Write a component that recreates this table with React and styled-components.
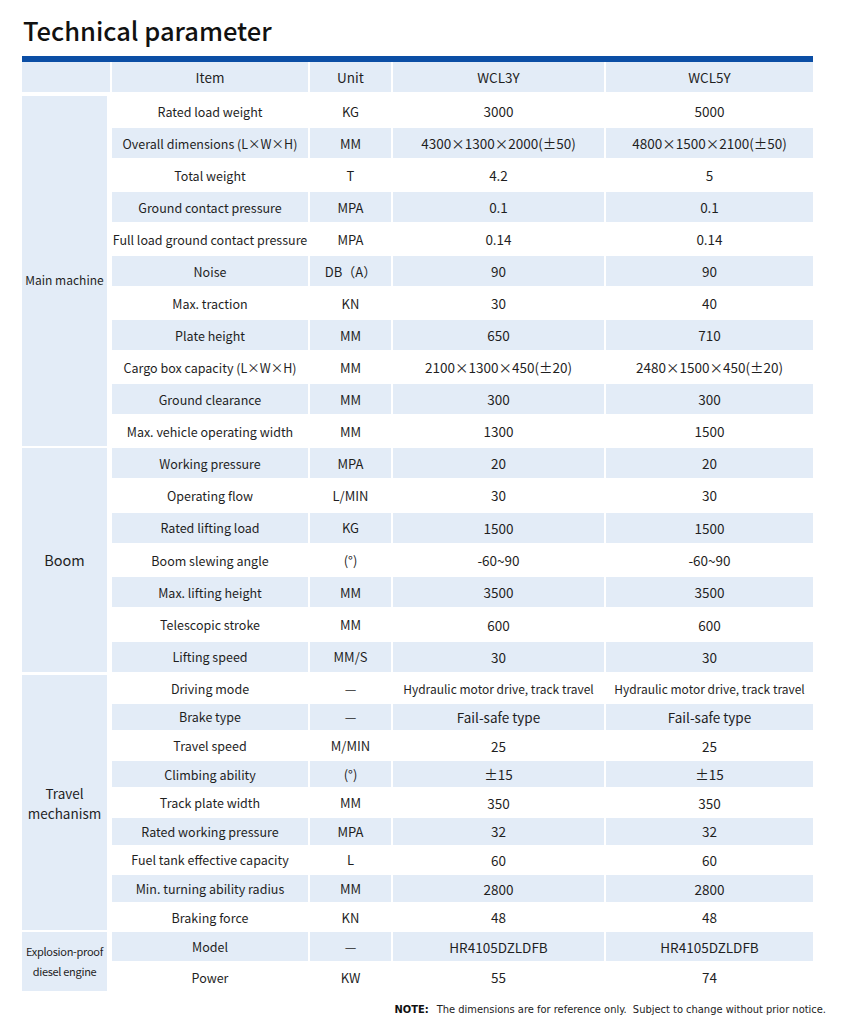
import React from 'react';
import styled, {createGlobalStyle} from 'styled-components';

const colors = {
  text: '#1f1f1f',
  bar: '#0b4ea5',
  stripe: '#e3ecf7',
  white: '#ffffff',
};

const GlobalStyle = createGlobalStyle`
  html, body {
    margin: 0;
    padding: 0;
    background: #fff;
  }
  body {
    font-family: "Noto Sans CJK SC", "Noto Sans", sans-serif;
    color: ${colors.text};
  }
`;

const Page = styled.div`
  width: 846px;
  height: 1024px;
  box-sizing: border-box;
  padding: 13px 33px 0 22px;
`;

const Title = styled.h1`
  margin: 0 0 0 1px;
  font-size: 25.5px;
  line-height: 34px;
  font-weight: 500;
  color: #111;
`;

const Bar = styled.div`
  margin-top: 9px;
  height: 6px;
  background: ${colors.bar};
`;

const Section = styled.div`
  display: grid;
  grid-template-columns: 88px 196px 81px 211px 207px;
  grid-auto-rows: ${p => p.$rowHeight}px;
  column-gap: 2px;
  row-gap: 2px;
  margin-top: ${p => p.$top || 0}px;
`;

const Cell = styled.div`
  display: flex;
  align-items: center;
  justify-content: center;
  text-align: center;
  font-size: ${p => p.$size || 13.5}px;
  white-space: nowrap;
  background: ${p => (p.$striped ? colors.stripe : colors.white)};
`;

const GroupCell = styled.div`
  grid-row: span ${p => p.$span};
  display: flex;
  align-items: center;
  justify-content: center;
  text-align: center;
  white-space: nowrap;
  background: ${colors.stripe};
  margin-right: ${p => (p.$head ? 0 : 3)}px;
  font-size: ${p => p.$size || 13}px;
  line-height: ${p => p.$lineHeight || 1.3};
  letter-spacing: ${p => p.$tracking || 0}px;
  padding-top: ${p => p.$shift || 0}px;
  box-sizing: border-box;
`;

const Note = styled.div`
  margin-top: 12px;
  display: flex;
  justify-content: flex-end;
  gap: 8px;
  font-family: "Liberation Sans Narrow", "DejaVu Sans Condensed", "Liberation Sans", sans-serif;
  font-size: 11px;
  color: #222;
  margin-right: -13px;
`;

const NoteLabel = styled.b`
  font-weight: 700;
  color: #111;
`;

const groups = [
  {
    name: 'Main machine',
    rowHeight: 30,
    top: 4,
    size: 12,
    shift: 18,
    rows: [
      ['Rated load weight', 'KG', '3000', '5000'],
      ['Overall dimensions (L×W×H)', 'MM', '4300×1300×2000(±50)', '4800×1500×2100(±50)'],
      ['Total weight', 'T', '4.2', '5'],
      ['Ground contact pressure', 'MPA', '0.1', '0.1'],
      ['Full load ground contact pressure', 'MPA', '0.14', '0.14'],
      ['Noise', 'DB（A）', '90', '90'],
      ['Max. traction', 'KN', '30', '40'],
      ['Plate height', 'MM', '650', '710'],
      ['Cargo box capacity (L×W×H)', 'MM', '2100×1300×450(±20)', '2480×1500×450(±20)'],
      ['Ground clearance', 'MM', '300', '300'],
      ['Max. vehicle operating width', 'MM', '1300', '1500'],
    ],
  },
  {
    name: 'Boom',
    rowHeight: 30.3,
    top: 2,
    size: 14.5,
    shift: 0,
    rows: [
      ['Working pressure', 'MPA', '20', '20'],
      ['Operating flow', 'L/MIN', '30', '30'],
      ['Rated lifting load', 'KG', '1500', '1500'],
      ['Boom slewing angle', '(°)', '-60~90', '-60~90'],
      ['Max. lifting height', 'MM', '3500', '3500'],
      ['Telescopic stroke', 'MM', '600', '600'],
      ['Lifting speed', 'MM/S', '30', '30'],
    ],
  },
  {
    name: <>Travel<br/>mechanism</>,
    rowHeight: 26.6,
    top: 3,
    size: 13.5,
    lineHeight: 1.45,
    shift: 2,
    rows: [
      ['Driving mode', '—', 'Hydraulic motor drive, track travel', 'Hydraulic motor drive, track travel'],
      ['Brake type', '—', 'Fail-safe type', 'Fail-safe type'],
      ['Travel speed', 'M/MIN', '25', '25'],
      ['Climbing ability', '(°)', '±15', '±15'],
      ['Track plate width', 'MM', '350', '350'],
      ['Rated working pressure', 'MPA', '32', '32'],
      ['Fuel tank effective capacity', 'L', '60', '60'],
      ['Min. turning ability radius', 'MM', '2800', '2800'],
      ['Braking force', 'KN', '48', '48'],
    ],
  },
  {
    name: <>Explosion-proof<br/>diesel engine</>,
    rowHeight: 28.5,
    top: 2,
    size: 11,
    lineHeight: 1.8,
    tracking: -0.3,
    shift: 0,
    rows: [
      ['Model', '—', 'HR4105DZLDFB', 'HR4105DZLDFB'],
      ['Power', 'KW', '55', '74'],
    ],
  },
];

const cellSize = (text, col) => {
  if (col === 0) return 12.5;
  if (col === 1) return 13;
  if (text.length > 24) return 12;
  return 13.5;
};

export default function App() {
  let index = 0;
  return (
    <Page>
      <GlobalStyle/>
      <Title>Technical parameter</Title>
      <Bar/>
      <Section $rowHeight={30}>
        <GroupCell $span={1} $head/>
        <Cell $striped $size={13.5}>Item</Cell>
        <Cell $striped $size={13.5}>Unit</Cell>
        <Cell $striped $size={13.5}>WCL3Y</Cell>
        <Cell $striped $size={13.5}>WCL5Y</Cell>
      </Section>
      {groups.map((group, g) => (
        <Section key={g} $rowHeight={group.rowHeight} $top={group.top}>
          <GroupCell
            $span={group.rows.length}
            $size={group.size}
            $lineHeight={group.lineHeight}
            $tracking={group.tracking}
            $shift={group.shift}
          >
            <span>{group.name}</span>
          </GroupCell>
          {group.rows.map((row) => {
            index += 1;
            const striped = index % 2 === 0;
            return row.map((text, col) => (
              <Cell key={`${index}-${col}`} $striped={striped} $size={cellSize(text, col)}>
                {text}
              </Cell>
            ));
          })}
        </Section>
      ))}
      <Note>
        <NoteLabel>NOTE:</NoteLabel>
        <span>The dimensions are for reference only.&nbsp; Subject to change without prior notice.</span>
      </Note>
    </Page>
  );
}
